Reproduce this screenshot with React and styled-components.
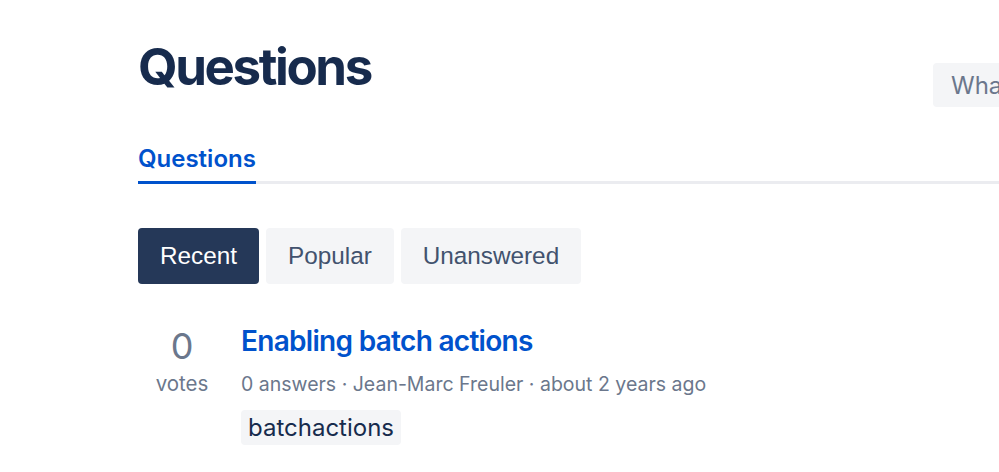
import React from "react";
import styled, { createGlobalStyle } from "styled-components";

const Global = createGlobalStyle`
  html, body { margin: 0; padding: 0; background: #fff; overflow: hidden; }
  body { font-family: Inter, "Noto Sans", sans-serif; }
`;

const Page = styled.div`
  width: 1200px;
  padding: 37px 0 0 138px;
  box-sizing: border-box;
`;

const Header = styled.div`
  display: flex;
  align-items: flex-start;
  width: 1095px;
`;

const Title = styled.h1`
  flex: 1;
  margin: 0;
  font-size: 51px;
  line-height: 60px;
  font-weight: 700;
  color: #172b4d;
  letter-spacing: -2.4px;
`;

const Search = styled.div`
  flex: 0 0 300px;
  margin-top: 26px;
  height: 44px;
  box-sizing: border-box;
  padding: 0 18px;
  background: #f4f5f7;
  border-radius: 4px;
  display: flex;
  align-items: center;
  font-size: 24px;
  color: #6b778c;
  white-space: nowrap;
  overflow: hidden;
`;

const Tabs = styled.div`
  margin-top: 37px;
  display: flex;
  border-bottom: 3px solid #ebecf0;
`;

const Tab = styled.div`
  font-size: 24px;
  font-weight: 600;
  color: #0052cc;
  line-height: 30px;
  padding-bottom: 7px;
  margin-bottom: -3px;
  border-bottom: 3px solid #0052cc;
`;

const Filters = styled.div`
  display: flex;
  gap: 7px;
  margin-top: 44px;
`;

const FilterButton = styled.button`
  height: 56px;
  padding: 0 22px;
  border: none;
  border-radius: 4px;
  font-family: "Liberation Sans", Arial, sans-serif;
  font-size: 24.3px;
  background: ${(p) => (p.$active ? "#253858" : "#f4f5f7")};
  color: ${(p) => (p.$active ? "#fff" : "#42526e")};
`;

const Row = styled.div`
  display: flex;
  margin-top: 48px;
`;

const Votes = styled.div`
  width: 88px;
  display: flex;
  flex-direction: column;
  align-items: center;
  color: #6b778c;
`;

const VoteCount = styled.div`
  font-size: 36px;
  line-height: 42px;
  margin-top: -7px;
`;

const VoteLabel = styled.div`
  font-size: 20.5px;
  line-height: 24px;
  margin-top: 5px;
`;

const Body = styled.div`
  margin-left: 15px;
  display: flex;
  flex-direction: column;
  align-items: flex-start;
`;

const QTitle = styled.a`
  font-size: 28px;
  font-weight: 600;
  line-height: 34px;
  color: #0052cc;
  text-decoration: none;
  letter-spacing: -0.7px;
  margin-top: -8px;
`;

const Meta = styled.div`
  margin-top: 14px;
  font-size: 19.5px;
  line-height: 24px;
  color: #6b778c;
`;

const Tag = styled.span`
  margin-top: 14px;
  background: #f4f5f7;
  border-radius: 4px;
  padding: 0 7px;
  height: 35px;
  display: flex;
  align-items: center;
  font-size: 24px;
  color: #172b4d;
`;

export default function App() {
  return (
    <>
      <Global />
      <Page>
        <Header>
          <Title>Questions</Title>
          <Search>What are you looking for?</Search>
        </Header>
        <Tabs>
          <Tab>Questions</Tab>
        </Tabs>
        <Filters>
          <FilterButton $active>Recent</FilterButton>
          <FilterButton>Popular</FilterButton>
          <FilterButton>Unanswered</FilterButton>
        </Filters>
        <Row>
          <Votes>
            <VoteCount>0</VoteCount>
            <VoteLabel>votes</VoteLabel>
          </Votes>
          <Body>
            <QTitle href="#">Enabling batch actions</QTitle>
            <Meta>0 answers · Jean-Marc Freuler · about 2 years ago</Meta>
            <Tag>batchactions</Tag>
          </Body>
        </Row>
      </Page>
    </>
  );
}
